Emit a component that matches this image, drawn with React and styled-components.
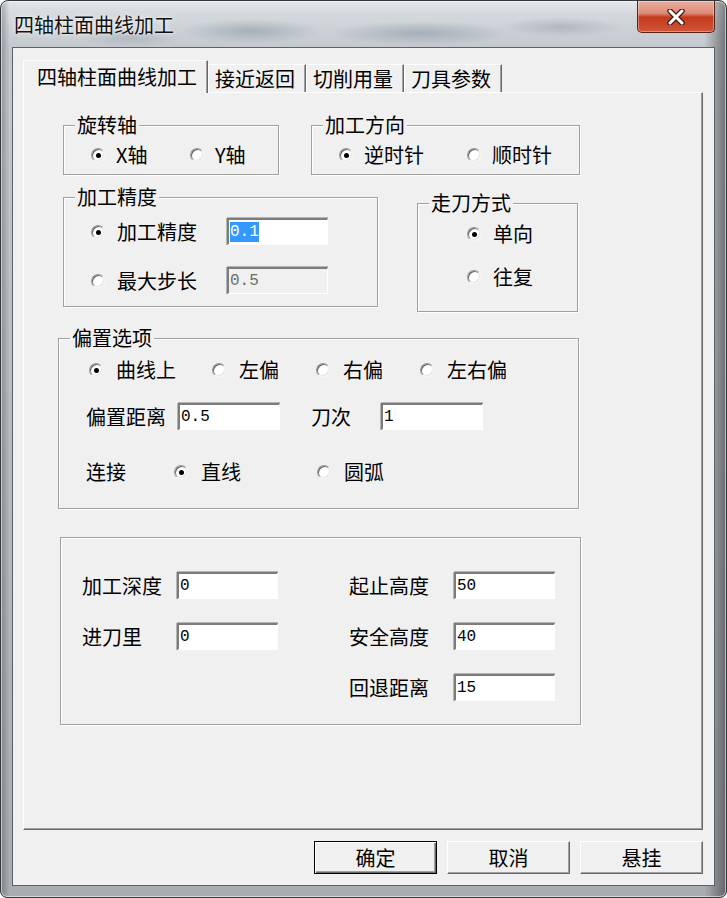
import React from "react";
import styled, { createGlobalStyle } from "styled-components";

const GlobalStyle = createGlobalStyle`
  html, body {
    margin: 0;
    padding: 0;
    background: #ffffff;
  }
  body {
    font-family: "Noto Sans CJK SC", "Noto Sans", sans-serif;
    color: #000;
  }
`;

const Window = styled.div`
  box-sizing: border-box;
  width: 727px;
  height: 898px;
  display: flex;
  flex-direction: column;
  border: 1px solid #34383c;
  border-radius: 8px 8px 7px 7px;
  overflow: hidden;
  background:
    radial-gradient(70px 12px at 250px 30px, rgba(80, 100, 120, 0.3), transparent),
    radial-gradient(90px 12px at 420px 32px, rgba(70, 90, 110, 0.28), transparent),
    radial-gradient(60px 10px at 560px 26px, rgba(110, 120, 130, 0.3), transparent),
    radial-gradient(50px 10px at 130px 36px, rgba(120, 130, 140, 0.3), transparent),
    linear-gradient(90deg, rgba(0, 0, 0, 0.25) 0%, rgba(0, 0, 0, 0) 1.2%, rgba(0, 0, 0, 0) 97%, rgba(30, 30, 30, 0.5) 100%),
    linear-gradient(180deg, #e3e7ea 0%, #d3d8dc 14px, #c3c9ce 46px, #a9adb1 100%);
  box-shadow: inset 0 0 0 1px rgba(255, 255, 255, 0.55);
`;

const TitleBar = styled.div`
  height: 46px;
  flex: none;
  display: flex;
  align-items: flex-start;
  justify-content: space-between;
`;

const TitleText = styled.div`
  margin: 12px 0 0 13px;
  font-size: 20px;
  line-height: 24px;
  color: #111;
  text-shadow: 0 0 6px rgba(255, 255, 255, 0.9), 0 0 2px rgba(255, 255, 255, 0.9);
`;

const CloseButton = styled.div`
  box-sizing: border-box;
  width: 78px;
  height: 32px;
  margin-right: 11px;
  display: flex;
  align-items: center;
  justify-content: center;
  border: 1px solid #5b1f16;
  border-top: none;
  border-radius: 0 0 5px 5px;
  background: linear-gradient(180deg, #eab0a2 0%, #dd8a74 40%, #c4391d 52%, #d2553a 100%);
  box-shadow: inset 0 0 0 1px rgba(255, 255, 255, 0.35);
`;

const Client = styled.div`
  flex: 1;
  margin: 0 11px 11px 11px;
  border: 1px solid #5c6268;
  background: #f0f0f0;
  padding: 12px 0 0 10px;
  display: flex;
  flex-direction: column;
`;

const TabStrip = styled.div`
  display: flex;
  align-items: flex-end;
  height: 32px;
`;

const Tab = styled.div`
  box-sizing: border-box;
  height: ${(p) => (p.$active ? 33 : 28)}px;
  margin-bottom: ${(p) => (p.$active ? -1 : 0)}px;
  padding: ${(p) => (p.$active ? "0 10px 0 13px" : "0 10px 0 6px")};
  position: relative;
  z-index: ${(p) => (p.$active ? 1 : 0)};
  background: #f0f0f0;
  border-top: 1px solid #ffffff;
  border-left: 1px solid #ffffff;
  border-right: 1px solid #696969;
  box-shadow: inset -1px 0 0 #a0a0a0;
  font-size: 20px;
  line-height: ${(p) => (p.$active ? 31 : 27)}px;
  white-space: nowrap;
`;

const TabPanel = styled.div`
  box-sizing: border-box;
  width: 680px;
  height: 738px;
  flex: none;
  border-style: solid;
  border-width: 1px;
  border-color: #ffffff #696969 #696969 #ffffff;
  box-shadow: inset -1px -1px 0 #a0a0a0;
  display: flex;
  flex-direction: column;
`;

const GroupRow = styled.div`
  display: flex;
  align-items: flex-start;
  gap: ${(p) => p.$gap || 0}px;
  margin: ${(p) => p.$top}px 0 0 ${(p) => p.$left}px;
`;

const Group = styled.div`
  box-sizing: border-box;
  width: ${(p) => p.$w}px;
  height: ${(p) => p.$h}px;
  margin: ${(p) => p.$mt || 0}px 0 0 ${(p) => p.$ml || 0}px;
  flex: none;
  border: 1px solid #a0a0a0;
  box-shadow: inset 1px 1px 0 #ffffff, 1px 1px 0 #ffffff;
`;

const Legend = styled.div`
  display: table;
  margin: -13px 0 0 11px;
  padding: 0 2px;
  background: #f0f0f0;
  font-size: 20px;
  line-height: 24px;
`;

const RadioLine = styled.div`
  display: flex;
  align-items: center;
  height: 24px;
  margin: ${(p) => p.$mt || 0}px 0 0 ${(p) => p.$ml || 0}px;
`;

const RadioColumn = styled.div`
  display: flex;
  flex-direction: column;
  gap: ${(p) => p.$gap}px;
`;

const Option = styled.label`
  display: inline-flex;
  align-items: center;
  gap: ${(p) => p.$gap || 11}px;
  width: ${(p) => (p.$w ? `${p.$w}px` : "auto")};
  flex: none;
  height: 24px;
  font-size: 20px;
  line-height: 24px;
  white-space: nowrap;
`;

const RadioDot = styled.span`
  box-sizing: border-box;
  width: 14px;
  height: 14px;
  flex: none;
  border-radius: 50%;
  border: 1px solid;
  border-color: #9a9a9a #f6f6f6 #f6f6f6 #9a9a9a;
  background: #ffffff;
  box-shadow: inset 1px 1px 0 #5e5e5e, inset -1px -1px 0 #e3e3e3;
  display: inline-flex;
  align-items: center;
  justify-content: center;
  &::after {
    content: "";
    display: ${(p) => (p.$checked ? "block" : "none")};
    width: 5px;
    height: 5px;
    border-radius: 50%;
    background: #000;
    margin: 1px 0 0 1px;
  }
`;

const FormGrid = styled.div`
  display: grid;
  grid-template-columns: ${(p) => p.$cols};
  grid-auto-rows: 27px;
  row-gap: ${(p) => p.$rowGap || 0}px;
  align-items: center;
  margin: ${(p) => p.$mt || 0}px 0 0 ${(p) => p.$ml || 0}px;
`;

const FieldLabel = styled.span`
  font-size: 20px;
  line-height: 24px;
  white-space: nowrap;
`;

const Field = styled.div`
  box-sizing: border-box;
  width: ${(p) => p.$w}px;
  height: 27px;
  border-style: solid;
  border-width: 2px 1px 1px 2px;
  border-color: #7c7c7c #ffffff #ffffff #7c7c7c;
  box-shadow: 0 -1px 0 #b4b4b4, -1px 0 0 #b4b4b4;
  background: ${(p) => (p.$disabled ? "#f0f0f0" : "#ffffff")};
  color: ${(p) => (p.$disabled ? "#6d6d6d" : "#000")};
  font-family: "Liberation Mono", "DejaVu Sans Mono", monospace;
  font-size: 16px;
  line-height: 20px;
  padding: 0 0 0 1px;
  display: flex;
  align-items: center;
`;

const Selected = styled.span`
  background: #3399ff;
  color: #ffffff;
`;

const ButtonRow = styled.div`
  width: 680px;
  display: flex;
  justify-content: flex-end;
  gap: 10px;
  margin-top: 11px;
`;

const Button = styled.div`
  box-sizing: border-box;
  width: 123px;
  height: 33px;
  display: flex;
  align-items: center;
  justify-content: center;
  background: #f0f0f0;
  border-style: solid;
  border-width: 1px;
  border-color: ${(p) =>
    p.$default ? "#000" : "#ffffff #696969 #696969 #ffffff"};
  box-shadow: ${(p) =>
    p.$default
      ? "inset 1px 1px 0 #ffffff, inset -1px -1px 0 #696969, inset -2px -2px 0 #a0a0a0"
      : "inset -1px -1px 0 #a0a0a0"};
  font-size: 20px;
  line-height: 24px;
`;

function Radio({ checked, w, gap, children }) {
  return (
    <Option $w={w} $gap={gap}>
      <RadioDot $checked={checked} />
      <span>{children}</span>
    </Option>
  );
}

function CloseGlyph() {
  return (
    <svg width="20" height="16" viewBox="0 0 20 16">
      <path d="M4 2 L16 14 M16 2 L4 14" stroke="#4a1a12" strokeWidth="5.5" strokeLinecap="round" />
      <path d="M4 2 L16 14 M16 2 L4 14" stroke="#ffffff" strokeWidth="3" strokeLinecap="round" />
    </svg>
  );
}

export default function App() {
  return (
    <>
      <GlobalStyle />
      <Window>
        <TitleBar>
          <TitleText>四轴柱面曲线加工</TitleText>
          <CloseButton aria-label="关闭">
            <CloseGlyph />
          </CloseButton>
        </TitleBar>

        <Client>
          <TabStrip>
            <Tab $active>四轴柱面曲线加工</Tab>
            <Tab>接近返回</Tab>
            <Tab>切削用量</Tab>
            <Tab>刀具参数</Tab>
          </TabStrip>

          <TabPanel>
            <GroupRow $top={32} $left={39} $gap={32}>
              <Group $w={216} $h={50}>
                <Legend>旋转轴</Legend>
                <RadioLine $mt={6} $ml={27}>
                  <Radio checked w={99}>X轴</Radio>
                  <Radio>Y轴</Radio>
                </RadioLine>
              </Group>
              <Group $w={269} $h={50}>
                <Legend>加工方向</Legend>
                <RadioLine $mt={6} $ml={27}>
                  <Radio checked w={128}>逆时针</Radio>
                  <Radio>顺时针</Radio>
                </RadioLine>
              </Group>
            </GroupRow>

            <GroupRow $top={22} $left={39} $gap={39}>
              <Group $w={315} $h={110}>
                <Legend>加工精度</Legend>
                <FormGrid $cols="136px 101px" $rowGap={22} $mt={9} $ml={27}>
                  <Radio checked gap={12}>加工精度</Radio>
                  <Field $w={101}>
                    <Selected>0.1</Selected>
                  </Field>
                  <Radio gap={12}>最大步长</Radio>
                  <Field $w={101} $disabled>
                    0.5
                  </Field>
                </FormGrid>
              </Group>
              <Group $w={161} $h={109} $mt={6}>
                <Legend>走刀方式</Legend>
                <RadioColumn $gap={19}>
                  <RadioLine $mt={7} $ml={49}>
                    <Radio checked gap={12}>单向</Radio>
                  </RadioLine>
                  <RadioLine $ml={49}>
                    <Radio gap={12}>往复</Radio>
                  </RadioLine>
                </RadioColumn>
              </Group>
            </GroupRow>

            <GroupRow $top={26} $left={34}>
              <Group $w={521} $h={171}>
                <Legend>偏置选项</Legend>
                <RadioLine $mt={8} $ml={30}>
                  <Radio checked w={123} gap={13}>曲线上</Radio>
                  <Radio w={104} gap={13}>左偏</Radio>
                  <Radio w={104} gap={13}>右偏</Radio>
                  <Radio gap={13}>左右偏</Radio>
                </RadioLine>
                <FormGrid $cols="92px 133px 70px 102px" $mt={21} $ml={27}>
                  <FieldLabel>偏置距离</FieldLabel>
                  <Field $w={102}>0.5</Field>
                  <FieldLabel>刀次</FieldLabel>
                  <Field $w={102}>1</Field>
                </FormGrid>
                <RadioLine $mt={30} $ml={27}>
                  <Option $w={88}>连接</Option>
                  <Radio checked w={143} gap={13}>直线</Radio>
                  <Radio gap={13}>圆弧</Radio>
                </RadioLine>
              </Group>
            </GroupRow>

            <GroupRow $top={28} $left={36}>
              <Group $w={521} $h={188}>
                <FormGrid $cols="95px 172px 105px 101px" $rowGap={24} $mt={34} $ml={21}>
                  <FieldLabel>加工深度</FieldLabel>
                  <Field $w={101}>0</Field>
                  <FieldLabel>起止高度</FieldLabel>
                  <Field $w={101}>50</Field>
                  <FieldLabel>进刀里</FieldLabel>
                  <Field $w={101}>0</Field>
                  <FieldLabel>安全高度</FieldLabel>
                  <Field $w={101}>40</Field>
                  <span />
                  <span />
                  <FieldLabel>回退距离</FieldLabel>
                  <Field $w={101}>15</Field>
                </FormGrid>
              </Group>
            </GroupRow>
          </TabPanel>

          <ButtonRow>
            <Button $default>确定</Button>
            <Button>取消</Button>
            <Button>悬挂</Button>
          </ButtonRow>
        </Client>
      </Window>
    </>
  );
}
